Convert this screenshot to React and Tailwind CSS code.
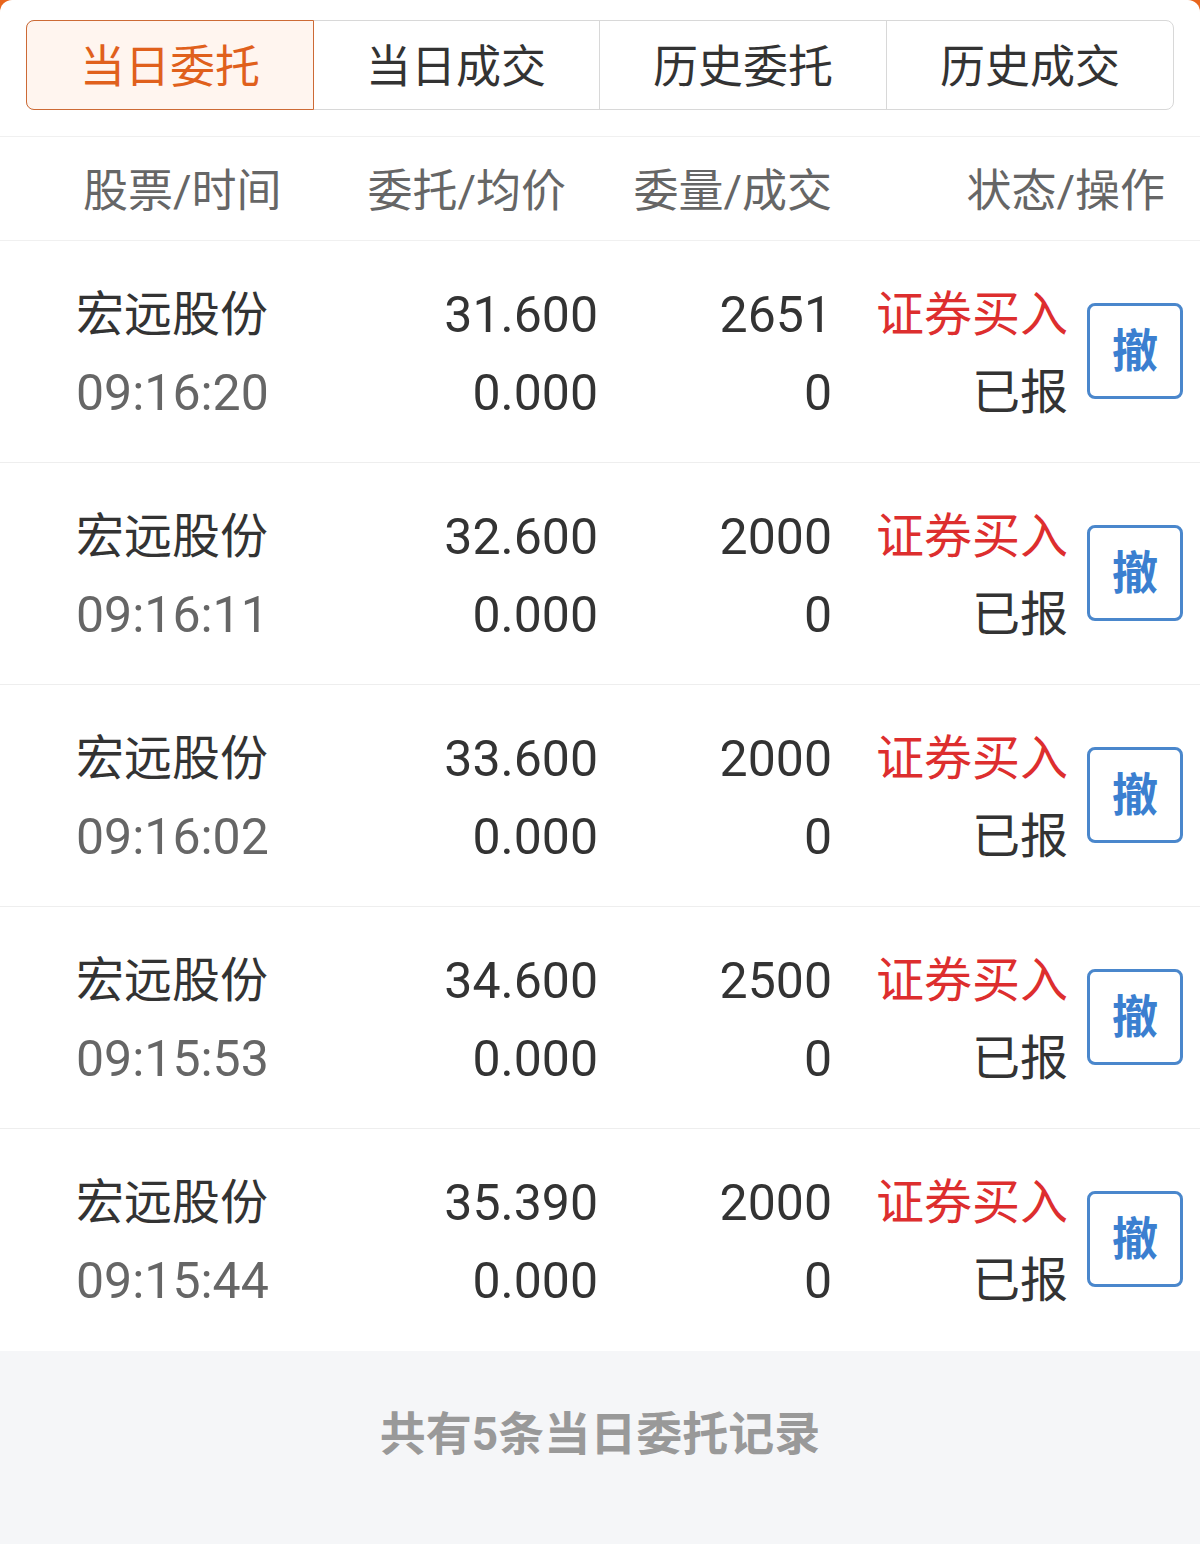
const ORDERS = [
  { name: "宏远股份", time: "09:16:20", price: "31.600", avg: "0.000", qty: "2651", filled: "0" },
  { name: "宏远股份", time: "09:16:11", price: "32.600", avg: "0.000", qty: "2000", filled: "0" },
  { name: "宏远股份", time: "09:16:02", price: "33.600", avg: "0.000", qty: "2000", filled: "0" },
  { name: "宏远股份", time: "09:15:53", price: "34.600", avg: "0.000", qty: "2500", filled: "0" },
  { name: "宏远股份", time: "09:15:44", price: "35.390", avg: "0.000", qty: "2000", filled: "0" },
];

const TABS = ["当日委托", "当日成交", "历史委托", "历史成交"];

const OrderRow = ({ order, last }) => (
  <div className={`flex items-center h-[222px] ${last ? "" : "border-b border-[#eeeeee]"}`}>
    <div className="w-[300px] pl-[76px] leading-[78px] pt-[4px]">
      <div className="text-[48px] text-[#333333]">{order.name}</div>
      <div className="text-[50px] text-[#666666]">{order.time}</div>
    </div>
    <div className="w-[298px] text-right leading-[78px] pt-[4px] text-[50px] text-[#333333]">
      <div>{order.price}</div>
      <div>{order.avg}</div>
    </div>
    <div className="w-[234px] text-right leading-[78px] pt-[4px] text-[50px] text-[#333333]">
      <div>{order.qty}</div>
      <div>{order.filled}</div>
    </div>
    <div className="w-[236px] text-right leading-[78px] pt-[4px] text-[48px]">
      <div className="text-[#dd2e2e]">证券买入</div>
      <div className="text-[#333333]">已报</div>
    </div>
    <button className="ml-[19px] mt-[-2px] w-[96px] h-[96px] border-[3px] border-[#4a87cc] rounded-[8px] flex items-center justify-center text-[46px] font-bold text-[#3b7fd0] leading-none">
      撤
    </button>
  </div>
);

export default function App() {
  return (
    <div className="min-h-screen bg-[#e8651c] font-['Roboto','Noto_Sans_CJK_SC',sans-serif]">
      <div className="bg-white rounded-t-[12px] min-h-screen flex flex-col">
        {/* tabs */}
        <div className="mx-[26px] mt-[20px] h-[90px] flex border border-[#d8d8d8] rounded-[8px]">
          {TABS.map((tab, i) => (
            <div
              key={tab}
              className={`flex-1 flex items-center justify-center pt-[5px] text-[45px] ${
                i === 0
                  ? "bg-[#fff5ef] border border-[#cd6a35] rounded-l-[8px] text-[#e0601c] -m-px"
                  : "text-[#333333] border-l border-[#d8d8d8]"
              } ${i === 1 ? "border-l-0" : ""}`}
            >
              {tab}
            </div>
          ))}
        </div>

        {/* column header */}
        <div className="mt-[26px] h-[105px] flex items-center pt-[6px] border-y border-[#f0f0f0] text-[45px] text-[#666666]">
          <div className="w-[283px] pl-[83px]">股票/时间</div>
          <div className="w-[283px] text-right">委托/均价</div>
          <div className="w-[266px] text-right">委量/成交</div>
          <div className="w-[333px] text-right">状态/操作</div>
        </div>

        {/* orders */}
        <div>
          {ORDERS.map((order, i) => (
            <OrderRow key={order.time} order={order} last={i === ORDERS.length - 1} />
          ))}
        </div>

        {/* footer */}
        <div className="flex-1 bg-[#f5f6f8] pt-[60px] pb-[80px] text-center text-[46px] leading-[46px] font-bold text-[#999999]">
          共有5条当日委托记录
        </div>
      </div>
    </div>
  );
}
